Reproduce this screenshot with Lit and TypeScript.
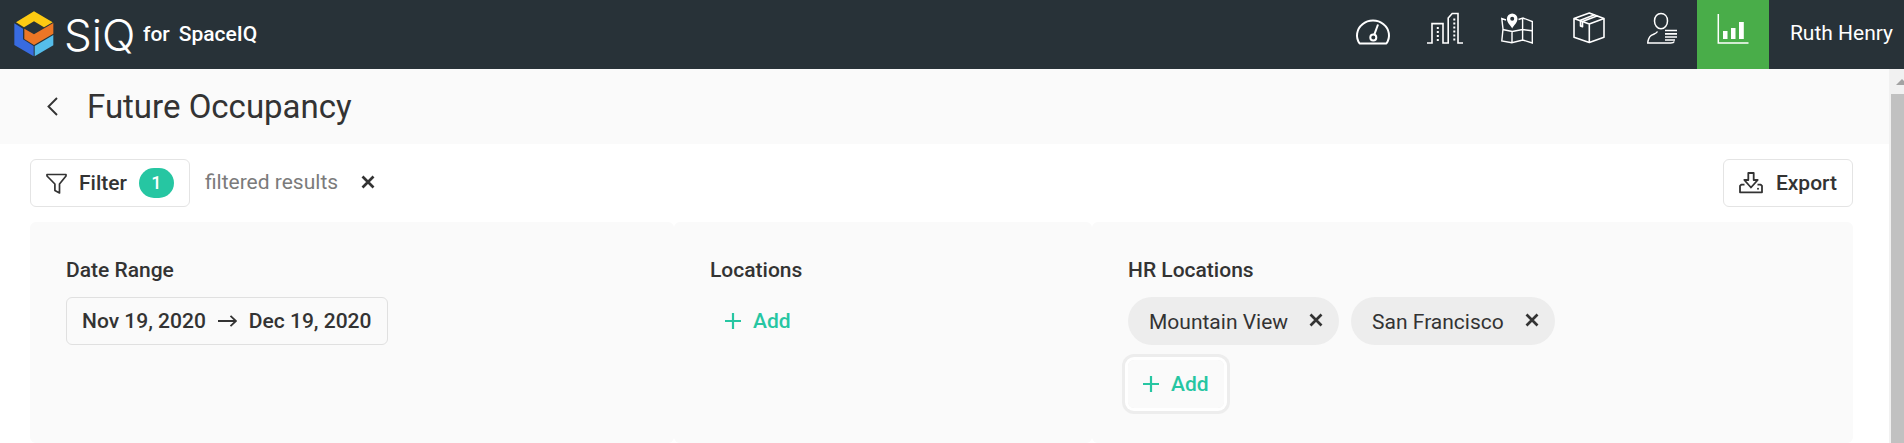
import { LitElement, html, css, svg } from "lit";
import { customElement, property, state } from "lit/decorators.js";
import { classMap } from "lit/directives/class-map.js";

const navIcons = {
  dashboard: svg`<g fill="none" stroke="#fff" stroke-width="2">
    <path d="M6.6 34.5h26.8A16 14.8 0 1 0 6.6 34.5Z" stroke-linejoin="round"/>
    <circle cx="20.3" cy="28.6" r="3"/><path d="M21.3 25.6 25 15.5"/></g>`,
  buildings: svg`<g fill="none" stroke="#fff" stroke-width="1.6">
    <path d="M2 34h5V14.600h11V34h5.200V9l4-4.500H33V34h5"/>
    <path d="M12.800 18v15M29.300 9.500V33" stroke-width="2" stroke-dasharray="2 2"/></g>`,
  map: svg`<g fill="none" stroke="#fff" stroke-width="1.400">
    <path d="M9 11 4.800 9.500 6 20 4.800 32l10 1.800 11-2.800 9.500 3V12.500L26 9l-4.500 1.500M5.500 20.500l9.800 2 10.200-2 9.500 1.200M15 22v11.500M25.600 9v22"/></g>
    <path fill="#fff" fill-rule="evenodd" d="M15.200 4.500a5.300 5.300 0 0 0-5.300 5.300c0 3.700 3.800 6.800 5.300 9.700 1.500-2.900 5.300-6 5.300-9.700a5.300 5.300 0 0 0-5.300-5.300Zm0 3.200a2 2 0 1 1 0 4 2 2 0 0 1 0-4Z"/>`,
  box: svg`<g fill="none" stroke="#fff" stroke-width="1.600" stroke-linejoin="round">
    <path d="M5 9.500 20.300 4 35 9.500v18.800L20.300 33.500 5 28.300Zm0 0 15.300 5.500L35 9.500M20.300 15v18.500M10.800 11.400l14.800-5.600M13.500 12.400l15-5.600"/>
    <path d="M11.500 11.600v5.400l2 .7v-5.300"/></g>`,
  people: svg`<g fill="none" stroke="#fff" stroke-width="1.500">
    <path d="M20 4.500c3.700 0 6.500 2.900 6.500 7.400 0 4.400-2.900 7.900-6.500 7.900s-6.500-3.500-6.500-7.900C13.500 7.400 16.300 4.500 20 4.500ZM16.500 22.500c-1 2-3.500 2.400-6.200 3.900-2.200 1.200-3.500 5.200-3.500 7.600h23c2 0 3-.5 3.500-1.500"/>
    <path d="M24 21.500h12M24 24.800h12M24 28h12M24 31h10" stroke-width="1.700"/></g>`,
  reports: svg`<path fill="none" stroke="#fff" stroke-width="1.500" d="M5.300 5v29h30.200"/>
    <path fill="#fff" d="M10 22h4.500v8H10zM18 19h4.500v11H18zM26 13h4.800v17H26z"/>`,
};

const icons = {
  back: svg`<path d="M10 1 1.500 9.500 10 18" fill="none" stroke="currentColor" stroke-width="1.900"/>`,
  close: svg`<path d="m1.500 1.500 11 11m0-11-11 11" fill="none" stroke="currentColor" stroke-width="2.700"/>`,
  plus: svg`<path d="M8 0v16M0 8h16" fill="none" stroke="currentColor" stroke-width="2.200"/>`,
  filter: svg`<path d="M1 1.500h19v1.500l-6.500 8V20l-4.600-2.400V11L1 3Z" fill="none" stroke="currentColor" stroke-width="1.700" stroke-linejoin="round"/>`,
  export: svg`<g fill="none" stroke="currentColor" stroke-width="1.800" stroke-linejoin="round"><path d="M9.300 1h5.400v7h4L12 15.500 5.300 8h4Z"/><path d="M5.500 12.700H2.300L1 14v6.300h22V14l-1.300-1.300h-3.200"/></g><circle cx="19" cy="16.700" r="1" fill="currentColor"/>`,
  arrow: svg`<path d="M0 6h18M12.500.800 18 6l-5.500 5.200" fill="none" stroke="currentColor" stroke-width="1.800"/>`,
};

const shared = css`
  :host { box-sizing: border-box; font-family: Roboto, "Liberation Sans", sans-serif; }
  *, *::before, *::after { box-sizing: border-box; }
  button { font: inherit; color: inherit; background: none; border: 0; padding: 0; cursor: pointer; }
  svg { display: block; flex: none; }
`;

@customElement("app-header")
class AppHeader extends LitElement {
  @property() user = "";
  @state() private current = "reports";

  static styles = [shared, css`
    :host { display: flex; align-items: stretch; justify-content: space-between; height: 69px; background: #283238; color: #fff; }
    .brand { display: flex; align-items: center; padding-left: 14px; color: inherit; text-decoration: none; }
    .logo { margin-right: 10px; margin-bottom: 2px; }
    .word { width: 71px; margin-right: 8px; font: 300 44px/60px Inter, sans-serif; }
    .product { display: flex; gap: 9px; padding-bottom: 2px; font-size: 21px; font-weight: 500; }
    .right { display: flex; }
    .nav { display: flex; }
    .item { display: flex; justify-content: center; width: 72px; padding-top: 9px; }
    .active { background: #49ad49; }
    .user { font-size: 21px; padding: 0 11px 4px 21px; }
  `];

  render() {
    return html`
      <a class="brand" href="#" aria-label="SiQ for SpaceIQ">
        <svg class="logo" width="40" height="46" viewBox="44 32 120 138">
          <path fill="#fdca12" d="M50 66 104 33l56 33-26 15-30-18-30 18Z"/>
          <path fill="#386be0" d="m45 69 26 16v32l32 20v31l-58-34Z"/>
          <path fill="#ec7625" d="m75 85 29 17 58-34v32l-58 34-29-18Z"/>
          <path fill="#55bdea" d="m106 137 56-33v31l-56 33Z"/>
        </svg>
        <span class="word">SiQ</span>
        <span class="product"><span>for</span><span>SpaceIQ</span></span>
      </a>
      <div class="right">
        <nav class="nav">
          ${Object.entries(navIcons).map(([name, icon]) => html`
            <button class=${classMap({ item: true, active: name === this.current })} aria-label=${name}
              @click=${() => (this.current = name)}>
              <svg width="40" height="40" viewBox="0 0 40 40">${icon}</svg>
            </button>`)}
        </nav>
        <button class="user">${this.user}</button>
      </div>`;
  }
}

@customElement("filter-panel")
class FilterPanel extends LitElement {
  @state() private sites = ["Mountain View", "San Francisco"];

  static styles = [shared, css`
    :host { display: grid; grid-template-columns: 644fr 418fr 761fr; font-size: 21px; line-height: 24px; color: #333; }
    .cell { background: #fafafa; border-radius: 6px; padding: 36px 36px 29px; min-height: 221px; }
    .label { margin: 0 0 15px; font-size: 21px; line-height: 24px; font-weight: 500; }
    .range { display: inline-flex; align-items: center; gap: 12px; height: 48px; padding: 0 15px; border: 1px solid #e0e0e0; border-radius: 6px; font-weight: 500; }
    .chips { display: flex; flex-wrap: wrap; gap: 12px; margin-bottom: 15px; }
    .chip { display: flex; align-items: center; gap: 21px; height: 48px; padding: 1px 16px 0 21px; border-radius: 24px; background: #ededed; }
    .remove { padding-bottom: 3px; }
    .add { display: flex; align-items: center; gap: 12px; height: 48px; padding: 0 15px; border-radius: 6px; color: #26c6a2; font-weight: 500; }
    .focused { box-shadow: 0 0 0 3px #fff, 0 0 0 6px #ededed; }
  `];

  private add(focused = false) {
    return html`<button class=${classMap({ add: true, focused })}>
      <svg width="16" height="16" viewBox="0 0 16 16">${icons.plus}</svg>Add</button>`;
  }

  render() {
    return html`
      <section class="cell">
        <h2 class="label">Date Range</h2>
        <button class="range"><span>Nov 19, 2020</span>
          <svg width="19" height="12" viewBox="0 0 19 12">${icons.arrow}</svg>
          <span>Dec 19, 2020</span></button>
      </section>
      <section class="cell">
        <h2 class="label">Locations</h2>
        ${this.add()}
      </section>
      <section class="cell">
        <h2 class="label">HR Locations</h2>
        <div class="chips">
          ${this.sites.map((site) => html`<span class="chip">${site}
            <button class="remove" aria-label="Remove ${site}" @click=${() => (this.sites = this.sites.filter((s) => s !== site))}>
              <svg width="14" height="14" viewBox="0 0 14 14">${icons.close}</svg></button></span>`)}
        </div>
        ${this.add(true)}
      </section>`;
  }
}

@customElement("app-root")
class AppRoot extends LitElement {
  static styles = [shared, css`
    :host { display: flex; flex-direction: column; height: 100vh; overflow: hidden; background: #fff; color: #333; font-size: 21px; line-height: 24px; }
    .body { display: flex; flex: 1; min-height: 0; }
    .page { flex: 1; min-width: 0; overflow: hidden; }
    .title { display: flex; align-items: center; gap: 28px; height: 75px; padding-left: 47px; background: #fafafa; }
    .heading { margin: 0; font-size: 33px; line-height: 40px; font-weight: 400; }
    .toolbar { display: flex; align-items: center; padding: 15px 36px 15px 30px; }
    .btn { display: flex; align-items: center; gap: 12px; height: 48px; padding: 0 15px; border: 1px solid #e4e4e4; border-radius: 6px; font-weight: 500; }
    .count { width: 35px; height: 30px; line-height: 30px; border-radius: 15px; background: #26c6a2; color: #fff; font-size: 18px; }
    .note { color: #7b7b7b; margin: 0 23px 0 15px; padding-bottom: 2px; }
    .clear { padding-bottom: 2px; }
    .push { margin-left: auto; }
    .panel { margin: 0 36px 0 30px; }
    .scroll { width: 15px; background: #f1f1f1; display: flex; flex-direction: column; padding-left: 2px; overflow: hidden; }
    .arrow { height: 25px; padding: 10px 0 0 5px; }
    .thumb { flex: 1; background: #c1c1c1; }
  `];

  render() {
    return html`
      <app-header user="Ruth Henry"></app-header>
      <div class="body">
        <main class="page">
          <div class="title">
            <button aria-label="Back"><svg width="12" height="19" viewBox="0 0 12 19">${icons.back}</svg></button>
            <h1 class="heading">Future Occupancy</h1>
          </div>
          <div class="toolbar">
            <button class="btn"><svg width="21" height="21" viewBox="0 0 21 21">${icons.filter}</svg>
              Filter <span class="count">1</span></button>
            <span class="note">filtered results</span>
            <button class="clear" aria-label="Clear filters"><svg width="14" height="14" viewBox="0 0 14 14">${icons.close}</svg></button>
            <button class="btn push"><svg width="25" height="22" viewBox="0 0 25 22">${icons.export}</svg>Export</button>
          </div>
          <filter-panel class="panel"></filter-panel>
        </main>
        <div class="scroll" aria-hidden="true">
          <div class="arrow"><svg width="12" height="6" viewBox="0 0 12 6"><path d="m0 6 6-6 6 6Z" fill="#a3a3a3"/></svg></div>
          <div class="thumb"></div>
        </div>
      </div>`;
  }
}
